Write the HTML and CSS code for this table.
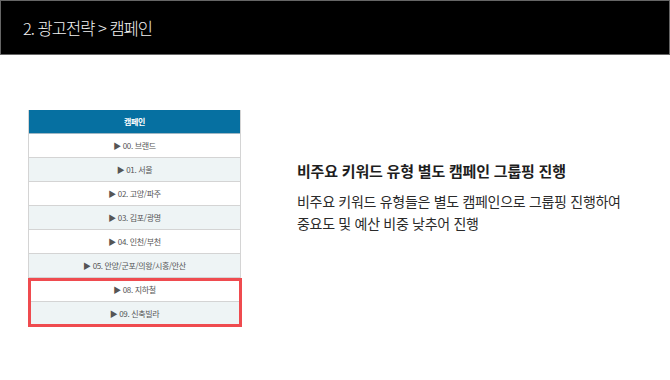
FILE: index.html
```html
<!DOCTYPE html>
<html lang="ko">
<head>
<meta charset="utf-8">
<link rel="stylesheet" href="styles.css">
</head>
<body>
<header class="topbar"><h1 class="page-title">2. 광고전략 &gt; 캠페인</h1></header>
<main class="content">
  <div class="campaign-table">
    <div class="row head">캠페인</div>
    <div class="row">▶ 00. 브랜드</div>
    <div class="row alt">▶ 01. 서울</div>
    <div class="row">▶ 02. 고양/파주</div>
    <div class="row alt">▶ 03. 김포/광명</div>
    <div class="row">▶ 04. 인천/부천</div>
    <div class="row alt">▶ 05. 안양/군포/의왕/시흥/안산</div>
    <div class="highlight">
      <div class="row">▶ 08. 지하철</div>
      <div class="row alt">▶ 09. 신축빌라</div>
    </div>
  </div>
  <section class="desc">
    <h2 class="desc-title">비주요 키워드 유형 별도 캠페인 그룹핑 진행</h2>
    <p class="desc-body">비주요 키워드 유형들은 별도 캠페인으로 그룹핑 진행하여<br>중요도 및 예산 비중 낮추어 진행</p>
  </section>
</main>
</body>
</html>
```
FILE: styles.css
```css
* { box-sizing: border-box; }
html, body { margin: 0; padding: 0; background: #fff; }
body {
  width: 670px;
  height: 380px;
  overflow: hidden;
  font-family: "Noto Sans CJK KR", "Noto Sans", sans-serif;
}
.topbar {
  height: 55px;
  background: #000;
  border: 1px solid #666;
  display: flex;
  align-items: center;
  padding-left: 22px;
}
.page-title {
  margin: 0;
  color: #f2f2f2;
  font-size: 16.5px;
  font-weight: 300;
  letter-spacing: -1px;
}
.content {
  display: flex;
  align-items: flex-start;
  padding: 55px 0 0 28px;
}
.campaign-table {
  width: 213px;
  border-left: 1px solid #d4d4d4;
  border-right: 1px solid #d4d4d4;
  background: #fff;
}
.row {
  height: 24px;
  display: flex;
  align-items: center;
  justify-content: center;
  border-bottom: 1px solid #d4d4d4;
  font-size: 8px;
  letter-spacing: -0.35px;
  color: #555;
  background: #fff;
}
.row.alt { background: #eef4f5; }
.row.head {
  background: #0670a1;
  color: #fff;
  font-weight: 700;
  border-bottom: 1px solid #9fb7c4;
}
.highlight { position: relative; margin: 0 -1px 0 -1px; }
.highlight .row { margin: 0 1px; }
.highlight::after {
  content: "";
  position: absolute;
  left: 0; right: -1px; top: 0; bottom: -1px;
  border: 3px solid #ef4b4f;
}
.desc {
  margin-left: 56px;
  padding-top: 50px;
  color: #1e1e1e;
}
.desc-title {
  margin: 0;
  font-size: 15px;
  font-weight: 700;
  letter-spacing: -0.2px;
  line-height: 22px;
}
.desc-body {
  margin: 8px 0 0;
  font-size: 14px;
  font-weight: 400;
  letter-spacing: -0.3px;
  line-height: 22px;
  color: #2a2a2a;
}
```
